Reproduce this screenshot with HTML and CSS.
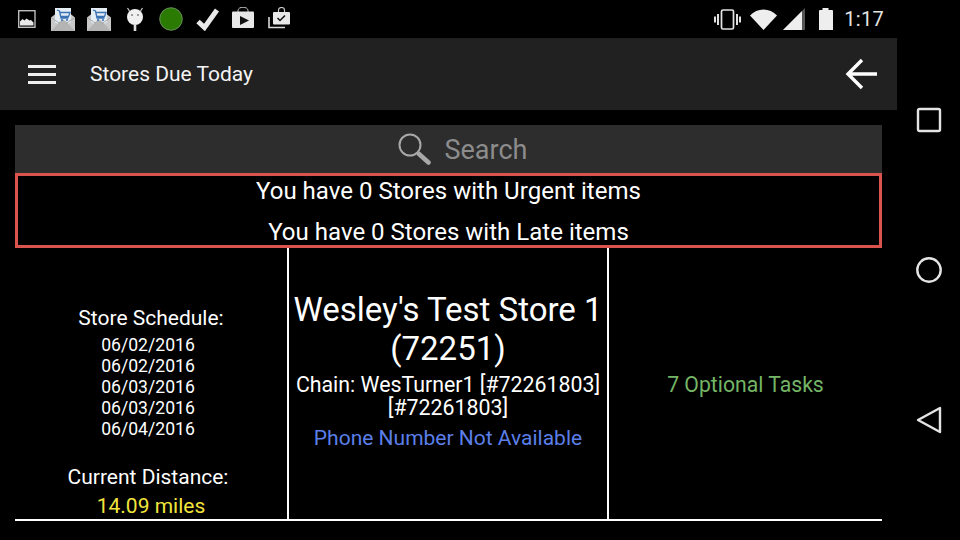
FILE: index.html
```html
<!DOCTYPE html>
<html lang="en">
<head>
    <meta charset="UTF-8">
    <meta name="viewport" content="width=device-width, initial-scale=1.0">
    <title>Stores Due Today</title>
    <link rel="stylesheet" href="styles.css">
</head>
<body>
    <div class="status-bar">
        <div class="status-left">
            <svg class="status-icon" viewBox="0 0 24 24">
                <rect x="3.700" y="3.700" width="16.300" height="16.600" fill="none" stroke="#bdbdbd" stroke-width="1.400"/>
                <path d="M5 18.500v-4l2.500-2.500 2 1.500 2-2 3 2 1.500-.5 2.500 2.500v3z" fill="#e8e8e8"/>
            </svg>
            <svg class="status-icon" viewBox="0 0 24 24">
                <path d="M0 10.500 12 1l12 9.500V24H0z" fill="#c9c9c9"/>
                <path d="M4 1h16v14l-8 5-8-5z" fill="#e4ecf4"/>
                <path d="M0 24l9-9.500 3-2 3 2 9 9.500z" fill="#b4b4b4"/>
                <path d="M0 10.500l9 6M24 10.500l-9 6" stroke="#9a9a9a" stroke-width=".8" fill="none"/>
                <path d="M6 3l2.500 1 1.500 7h7.500M9 5.500h10l-1.500 4H9.800" stroke="#3a72b4" stroke-width="1.300" fill="none"/>
                <circle cx="11" cy="13" r="1.100" fill="#3a72b4"/>
                <circle cx="16" cy="13" r="1.100" fill="#3a72b4"/>
            </svg>
            <svg class="status-icon" viewBox="0 0 24 24">
                <path d="M0 10.500 12 1l12 9.500V24H0z" fill="#c9c9c9"/>
                <path d="M4 1h16v14l-8 5-8-5z" fill="#e4ecf4"/>
                <path d="M0 24l9-9.500 3-2 3 2 9 9.500z" fill="#b4b4b4"/>
                <path d="M0 10.500l9 6M24 10.500l-9 6" stroke="#9a9a9a" stroke-width=".8" fill="none"/>
                <path d="M6 3l2.500 1 1.500 7h7.500M9 5.500h10l-1.500 4H9.800" stroke="#3a72b4" stroke-width="1.300" fill="none"/>
                <circle cx="11" cy="13" r="1.100" fill="#3a72b4"/>
                <circle cx="16" cy="13" r="1.100" fill="#3a72b4"/>
            </svg>
            <svg class="status-icon" viewBox="0 0 24 24">
                <circle cx="12" cy="10" r="8" fill="#f0f0f0"/>
                <path d="M12 17v7" stroke="#dcdcdc" stroke-width="2.600"/>
                <path d="M6.500 4 4.500 1M17.500 4l2-3" stroke="#d0d0d0" stroke-width="1.200"/>
                <circle cx="9" cy="8" r=".9" fill="#777"/>
                <circle cx="15" cy="8" r=".9" fill="#777"/>
            </svg>
            <svg class="status-icon" viewBox="0 0 24 24">
                <circle cx="12" cy="12" r="11.300" fill="#2a7a04" stroke="#7a9a70" stroke-width=".8"/>
            </svg>
            <svg class="status-icon" viewBox="0 0 24 24">
                <path d="M3 14.500l6.500 6L22 3" fill="none" stroke="#e8e8e8" stroke-width="5"/>
            </svg>
            <svg class="status-icon" viewBox="0 0 24 24">
                <path d="M7 5V3.500a5 3.300 0 0 1 10 0V5" fill="none" stroke="#c8c8c8" stroke-width="1"/>
                <rect x="1" y="4.500" width="22" height="16.500" rx="1" fill="#e8e8e8"/>
                <path d="M9 9l9 4.500-9 4.500z" fill="#111"/>
            </svg>
            <svg class="status-icon" viewBox="0 0 24 24">
                <path d="M11.500 5V3a3 2.500 0 0 1 6 0V5" fill="none" stroke="#c8c8c8" stroke-width="1.200"/>
                <rect x="6" y="5" width="17" height="12.500" rx="1" fill="#e8e8e8"/>
                <path d="M10.500 11l2.500 2.500 5-5" fill="none" stroke="#111" stroke-width="1.500"/>
                <path d="M2 10v10.500h16" fill="none" stroke="#d8d8d8" stroke-width="1.600"/>
            </svg>
        </div>
        <div class="status-right">
            <svg class="vibrate-icon" viewBox="0 0 27 21">
                <rect x="7.500" y="1" width="12" height="19" rx="1.500" fill="none" stroke="#e4e4e4" stroke-width="1.700"/>
                <path d="M4 5v11M1 7.500v6M23 5v11M26 7.500v6" stroke="#e0e0e0" stroke-width="2"/>
            </svg>
            <svg class="wifi-icon" viewBox="0 0 27 21">
                <path d="M0 6.500C7-1.500 20-1.500 27 6.500L13.500 21z" fill="#eeeeee"/>
            </svg>
            <svg class="signal-icon" viewBox="0 0 22 22">
                <path d="M0 22 22 0v22z" fill="#555"/>
                <path d="M0 22 19 3v19z" fill="#eeeeee"/>
            </svg>
            <svg class="battery-icon" viewBox="0 0 15 22">
                <path d="M4.500 0h6v2H14a1 1 0 0 1 1 1v19H1V3a1 1 0 0 1 1-1h2.500z" fill="#eeeeee"/>
            </svg>
            <span class="clock">1:17</span>
        </div>
    </div>

    <div class="screen">
        <div class="app">
            <div class="toolbar">
                <svg class="menu-icon" viewBox="0 0 28 21">
                    <path d="M0 2.500h28M0 10.500h28M0 18.500h28" stroke="#eeeeee" stroke-width="3"/>
                </svg>
                <span class="toolbar-title">Stores Due Today</span>
                <svg class="back-icon" viewBox="0 0 32 32">
                    <path d="M32 16H3M17 2 3 16l14 14" fill="none" stroke="#ffffff" stroke-width="3.400"/>
                </svg>
            </div>

            <div class="content">
                <div class="search-bar">
                    <svg class="search-icon" viewBox="0 0 33 33">
                        <circle cx="12" cy="12" r="10.500" fill="none" stroke="#a8a8a8" stroke-width="2"/>
                        <path d="M21 21l9.500 8.500" stroke="#a8a8a8" stroke-width="4.500" stroke-linecap="round"/>
                    </svg>
                    <span class="search-text">Search</span>
                </div>

                <div class="alert-box">
                    <div>You have 0 Stores with Urgent items</div>
                    <div>You have 0 Stores with Late items</div>
                </div>

                <div class="store-row">
                    <div class="store-cell schedule-cell">
                        <div class="cell-label">Store Schedule:</div>
                        <div class="dates">
                            <div>06/02/2016</div>
                            <div>06/02/2016</div>
                            <div>06/03/2016</div>
                            <div>06/03/2016</div>
                            <div>06/04/2016</div>
                        </div>
                        <div class="cell-label distance-label">Current Distance:</div>
                        <div class="distance">14.09 miles</div>
                    </div>
                    <div class="store-cell info-cell">
                        <div class="store-name">Wesley's Test Store 1 (72251)</div>
                        <div class="chain">Chain: WesTurner1 [#72261803] [#72261803]</div>
                        <div class="phone">Phone Number Not Available</div>
                    </div>
                    <div class="store-cell tasks-cell">7 Optional Tasks</div>
                </div>
            </div>
        </div>

        <div class="nav-bar">
            <div class="nav-item">
                <svg class="nav-icon" viewBox="0 0 26 26">
                    <rect x="2" y="2" width="22" height="22" rx="1.500" fill="none" stroke="#e4e4e4" stroke-width="2.400"/>
                </svg>
            </div>
            <div class="nav-item">
                <svg class="nav-icon" viewBox="0 0 26 26">
                    <circle cx="13" cy="13" r="11.700" fill="none" stroke="#e4e4e4" stroke-width="2.400"/>
                </svg>
            </div>
            <div class="nav-item">
                <svg class="nav-icon" viewBox="0 0 26 28">
                    <path d="M24 2v24L2 14z" fill="none" stroke="#e4e4e4" stroke-width="2.400" stroke-linejoin="round"/>
                </svg>
            </div>
        </div>
    </div>
</body>
</html>
```

FILE: styles.css
```css
* {
    margin: 0;
    padding: 0;
    box-sizing: border-box;
}

body {
    font-family: Roboto, 'Liberation Sans', sans-serif;
    background: #000;
    color: #fff;
    width: 960px;
    height: 540px;
    overflow: hidden;
}

svg {
    display: block;
    flex: none;
}

.status-bar {
    height: 38px;
    display: flex;
    justify-content: space-between;
    align-items: center;
    padding: 0 76px 0 15px;
}

.status-left {
    display: flex;
    gap: 12px;
}

.status-icon {
    width: 24px;
    height: 24px;
}

.status-right {
    display: flex;
    align-items: center;
}

.vibrate-icon {
    width: 27px;
    height: 21px;
}

.wifi-icon {
    width: 27px;
    height: 21px;
    margin-left: 9px;
}

.signal-icon {
    width: 22px;
    height: 22px;
    margin-left: 6px;
}

.battery-icon {
    width: 15px;
    height: 22px;
    margin-left: 13px;
}

.clock {
    font-size: 20px;
    color: #e4e4e4;
    margin-left: 11px;
    letter-spacing: .3px;
}

.screen {
    display: flex;
    height: 502px;
}

.app {
    width: 897px;
}

.toolbar {
    height: 72px;
    background: #212121;
    display: flex;
    align-items: center;
    padding: 0 20px 0 28px;
}

.menu-icon {
    width: 28px;
    height: 21px;
}

.toolbar-title {
    font-size: 21px;
    margin-left: 34px;
    color: #f4f4f4;
    flex: 1;
}

.back-icon {
    width: 32px;
    height: 32px;
}

.content {
    padding: 15px 15px 0;
}

.search-bar {
    height: 48px;
    background: #2d2d2d;
    display: flex;
    justify-content: center;
    align-items: center;
    gap: 14px;
    padding-left: 28px;
}

.search-icon {
    width: 33px;
    height: 33px;
}

.search-text {
    font-size: 27px;
    color: #8c8c8c;
    padding-top: 2px;
}

.alert-box {
    height: 75px;
    border: 3px solid #d9534f;
    display: flex;
    flex-direction: column;
    gap: 12px;
    align-items: center;
    font-size: 24.05px;
    line-height: 29px;
    padding-top: 1px;
}

.store-row {
    display: grid;
    grid-template-columns: 272px 322px 273px;
    height: 273px;
    border-bottom: 2px solid #fff;
}

.store-cell {
    text-align: center;
}

.schedule-cell {
    padding-top: 58px;
}

.cell-label {
    font-size: 21px;
    line-height: 24px;
}

.dates {
    font-size: 17.6px;
    line-height: 21px;
    margin-top: 5px;
    padding-right: 6px;
}

.distance-label {
    margin-top: 25px;
    padding-right: 6px;
}

.distance {
    font-size: 21px;
    line-height: 24px;
    margin-top: 5px;
    color: #f2e43c;
}

.info-cell {
    border-left: 2px solid #fff;
    border-right: 2px solid #fff;
    padding-top: 42px;
}

.store-name {
    font-size: 33px;
    line-height: 39px;
}

.chain {
    font-size: 21.33px;
    line-height: 23px;
    margin-top: 5px;
}

.phone {
    font-size: 21px;
    line-height: 24px;
    margin-top: 7px;
    color: #5b7fe8;
}

.tasks-cell {
    font-size: 21.2px;
    color: #74b566;
    display: flex;
    align-items: center;
    justify-content: center;
    padding-top: 2px;
}

.nav-bar {
    width: 63px;
    padding-top: 7px;
}

.nav-item {
    height: 150px;
    display: flex;
    align-items: center;
    justify-content: center;
}

.nav-icon {
    width: 26px;
    height: 28px;
}
```
